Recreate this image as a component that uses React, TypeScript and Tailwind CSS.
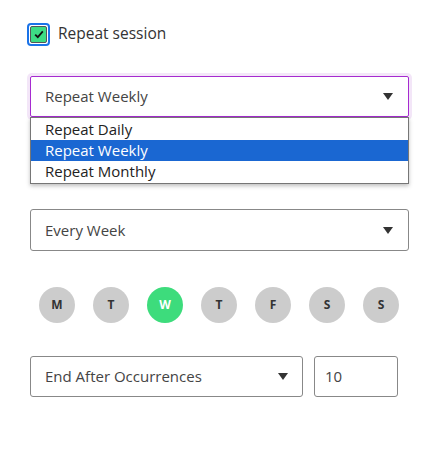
import React from "react";

const Caret = () => (
  <svg width="10" height="7" viewBox="0 0 10 7" className="shrink-0">
    <path d="M0 0 L10 0 L5 7 Z" fill="#333" />
  </svg>
);

const days = [
  { l: "M", on: false },
  { l: "T", on: false },
  { l: "W", on: true },
  { l: "T", on: false },
  { l: "F", on: false },
  { l: "S", on: false },
  { l: "S", on: false },
];

export default function App() {
  return (
    <div
      className="w-[443px] h-[473px] bg-white text-[#444] overflow-hidden relative"
      style={{ fontFamily: '"Open Sans", "Noto Sans", sans-serif' }}
    >
      <div className="pl-[30px] pt-[23px] flex flex-col">
        <div className="flex items-center gap-[8px] ml-[-3px] h-[22px]">
          <div className="w-[23px] h-[23px] rounded-[4px] border-2 border-[#1a73e8] p-[1px] flex">
            <div className="flex-1 rounded-[2px] border border-[#555] bg-[#3ddc84] flex items-center justify-center">
              <svg width="10" height="9" viewBox="0 0 10 9">
                <path d="M1.2 4.6 L3.8 7.2 L8.8 1.4" stroke="#111" strokeWidth="1.8" fill="none" />
              </svg>
            </div>
          </div>
          <span className="text-[15.5px] text-[#333] leading-none">Repeat session</span>
        </div>

        <div className="relative mt-[31px] w-[379px]">
          <div className="h-[41px] border border-[#a62bd0] rounded-[2px] shadow-[0_0_0_3px_#f3e6f8] flex items-center justify-between pl-[14px] pr-[15px]">
            <span className="text-[15px]">Repeat Weekly</span>
            <Caret />
          </div>
          <div className="absolute left-0 top-[41px] w-[379px] border border-[#767676] bg-white shadow-[0_2px_4px_rgba(0,0,0,0.25)] flex flex-col py-px">
            <div className="h-[21px] pl-[14px] flex items-center text-[15px] text-[#222]">Repeat Daily</div>
            <div className="h-[21px] pl-[14px] flex items-center text-[15px] text-white bg-[#1a67d2]">Repeat Weekly</div>
            <div className="h-[21px] pl-[14px] flex items-center text-[15px] text-[#222]">Repeat Monthly</div>
          </div>
        </div>

        <div className="mt-[92px] w-[379px] h-[42px] border border-[#888] rounded-[3px] flex items-center justify-between pl-[14px] pr-[15px]">
          <span className="text-[15px]">Every Week</span>
          <Caret />
        </div>

        <div className="mt-[36px] ml-[9px] flex gap-[18px]">
          {days.map((d, i) => (
            <div
              key={i}
              className={
                d.on
                  ? "w-[36px] h-[36px] rounded-full bg-[#3ddc7c] text-white flex items-center justify-center text-[12px] font-bold"
                  : "w-[36px] h-[36px] rounded-full bg-[#cccccc] text-[#333] flex items-center justify-center text-[12px] font-bold"
              }
            >
              {d.l}
            </div>
          ))}
        </div>

        <div className="mt-[33px] flex gap-[11px]">
          <div className="w-[273px] h-[41px] border border-[#888] rounded-[3px] flex items-center justify-between pl-[14px] pr-[14px]">
            <span className="text-[15px]">End After Occurrences</span>
            <Caret />
          </div>
          <div className="w-[84px] h-[41px] border border-[#888] rounded-[3px] flex items-center pl-[10px]">
            <span className="text-[15px]">10</span>
          </div>
        </div>
      </div>
    </div>
  );
}
